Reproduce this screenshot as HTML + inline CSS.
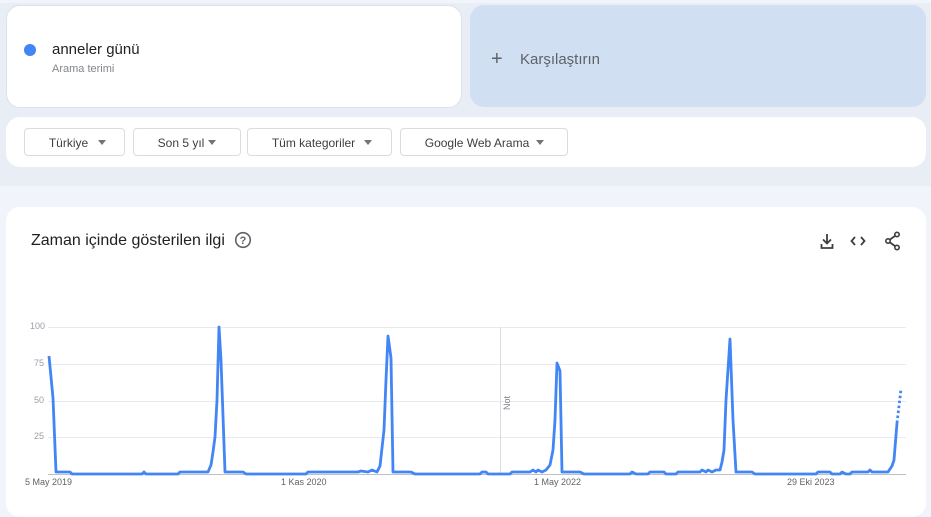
<!DOCTYPE html>
<html><head><meta charset="utf-8"><style>
*{margin:0;padding:0;box-sizing:border-box}
body{width:931px;height:501px;overflow:hidden;background:#f1f4fb;font-family:"Liberation Sans",Arial,sans-serif;position:relative}
.band{position:absolute;left:0;top:3px;width:931px;height:183px;background:#e8edf6}
.card{position:absolute;background:#fff;border-radius:14px}
.dd{position:absolute;top:128px;height:28px;border:1px solid #dadce0;border-radius:4px;font-size:12px;color:#3c4043;line-height:28px;background:#fff}
.dd span.t{position:absolute;left:0;right:0;text-align:center}
.tri{position:absolute;top:11px;width:0;height:0;border-left:4px solid transparent;border-right:4px solid transparent;border-top:5px solid #70757a}
.yl{position:absolute;font-size:9px;color:#9aa0a6;left:30px}
.xl{position:absolute;font-size:9px;color:#5f6368;top:477px}
</style></head><body>
<div class="band"></div>
<div class="card" style="left:6px;top:5px;width:456px;height:103px;border:1px solid #dde3ec"></div>
<div style="position:absolute;left:24px;top:44px;width:12px;height:12px;border-radius:50%;background:#4285f4"></div>
<div style="position:absolute;left:52px;top:41px;font-size:15px;color:#202124">anneler günü</div>
<div style="position:absolute;left:52px;top:63px;font-size:11px;color:#80868b">Arama terimi</div>
<div class="card" style="left:470px;top:5px;width:456px;height:102px;background:#d0dff2"></div>
<div style="position:absolute;left:491px;top:48px;font-size:20px;color:#5f6368;line-height:22px">+</div>
<div style="position:absolute;left:520px;top:51px;font-size:15px;color:#5f6368">Karşılaştırın</div>
<div class="card" style="left:6px;top:117px;width:920px;height:50px"></div>
<div class="dd" style="left:24px;width:101px"><span class="t" style="left:-12px">Türkiye</span><i class="tri" style="left:73px"></i></div>
<div class="dd" style="left:133px;width:108px"><span class="t" style="left:-12px">Son 5 yıl</span><i class="tri" style="left:74px"></i></div>
<div class="dd" style="left:247px;width:145px"><span class="t" style="left:-12px">Tüm kategoriler</span><i class="tri" style="left:116px"></i></div>
<div class="dd" style="left:400px;width:168px"><span class="t" style="left:-14px">Google Web Arama</span><i class="tri" style="left:135px"></i></div>
<div class="card" style="left:6px;top:207px;width:920px;height:310px"></div>
<div style="position:absolute;left:31px;top:232px;font-size:16px;color:#202124">Zaman içinde gösterilen ilgi</div>
<svg style="position:absolute;left:234px;top:231px" width="18" height="18" viewBox="0 0 18 18"><circle cx="9" cy="9" r="7.3" fill="none" stroke="#5f6368" stroke-width="1.6"/><text x="9" y="13" font-size="11" text-anchor="middle" fill="#5f6368" font-family="Liberation Sans" font-weight="bold">?</text></svg>
<svg style="position:absolute;left:818px;top:230px" width="84" height="22" viewBox="0 0 84 22">
<g fill="none" stroke="#3c4043" stroke-width="1.8">
<path d="M9 4v9M5 9.5l4 4 4-4M3.5 14v4h11v-4"/>
<path d="M37 7l-3.5 4 3.5 4M43 7l3.5 4-3.5 4"/>
<path d="M79 4.5l-9 6.5 9 6.5"/>
</g>
<g fill="#fff" stroke="#3c4043" stroke-width="1.6"><circle cx="79" cy="4.5" r="2.2"/><circle cx="70" cy="11" r="2.2"/><circle cx="79" cy="17.5" r="2.2"/></g>
</svg>
<svg style="position:absolute;left:0;top:0" width="931" height="501">
<g stroke="#e8eaed" stroke-width="1"><line x1="48" y1="327.5" x2="906" y2="327.5"/><line x1="48" y1="364.5" x2="906" y2="364.5"/><line x1="48" y1="401.5" x2="906" y2="401.5"/><line x1="48" y1="437.5" x2="906" y2="437.5"/></g>
<line x1="500.5" y1="327" x2="500.5" y2="474" stroke="#dadce0"/>
<line x1="48" y1="474.5" x2="906" y2="474.5" stroke="#bdc1c6"/>
<text x="0" y="0" transform="translate(510,410) rotate(-90)" font-size="9" fill="#80868b" font-family="Liberation Sans">Not</text>
<polyline fill="none" stroke="#4285f4" stroke-width="2.8" stroke-linejoin="round" points="49,356 53,398 56,472 70,472 72,474 142,474 144,472 146,474 178,474 180,472 208,472 211,465 213,452 215,437 217,400 219,327 221,360 225,472 243,472 246,474 306,474 308,472 358,472 361,471 368,472 372,470 377,472 380,466 384,430 386,380 388,336 391,358 393,472 411,472 415,474 480,474 482,472 486,472 488,474 510,474 512,472 530,472 533,470 536,472 538,470 542,472 546,470 550,465 553,450 555,420 557,363 560,371 562,472 580,472 584,474 630,474 632,472 636,474 648,474 650,472 664,472 666,474 676,474 678,472 700,472 702,470 706,472 708,470 712,472 716,470 720,470 722,462 724,450 726,400 730,339 733,420 736,472 752,472 755,474 816,474 818,472 830,472 832,474 840,474 842,472 846,474 850,474 852,472 866,472 868,472 870,470 872,472 888,472 892,466 894,460 897,423"/>
<polyline fill="none" stroke="#4285f4" stroke-width="2.8" stroke-dasharray="2.5,2.5" points="897,423 901,389"/>
</svg>
<div class="yl" style="top:321px">100</div>
<div class="yl" style="top:358px;left:34px">75</div>
<div class="yl" style="top:395px;left:34px">50</div>
<div class="yl" style="top:431px;left:34px">25</div>
<div class="xl" style="left:25px">5 May 2019</div>
<div class="xl" style="left:281px">1 Kas 2020</div>
<div class="xl" style="left:534px">1 May 2022</div>
<div class="xl" style="left:787px">29 Eki 2023</div>
</body></html>
